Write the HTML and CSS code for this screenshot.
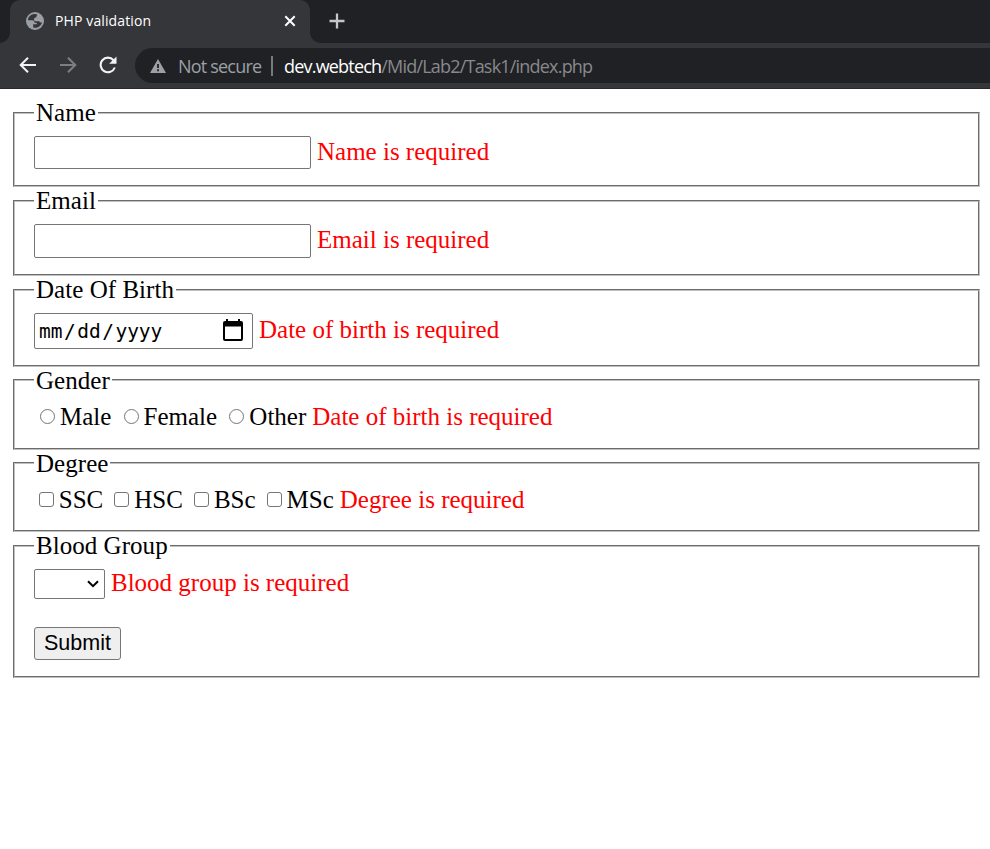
FILE: index.html
```html
<!DOCTYPE html>
<html lang="en">
<head>
<meta charset="utf-8">
<title>PHP validation</title>
<link rel="stylesheet" href="styles.css">
</head>
<body>
<header class="browser">
  <div class="tabstrip">
    <div class="tab">
      <svg class="globe" width="18" height="18" viewBox="0 0 18 18"><circle cx="9" cy="9" r="9" fill="#9aa0a6"/><path d="M7.2 2.2 C4 2.8 2 5.4 2 8.2 L6 8.2 C7.7 8.2 8.6 9 8.6 10.7 L10.8 10.7 L10.8 12.3 L7.2 12.3 L7.2 15.6 C11 16.7 15.2 14.3 16 10.2 C14.8 10.8 13.7 10.5 13.2 9.3 L9.8 9.3 C8.5 9.3 8 8.4 8 7.3 C8 6 8.9 5.4 10.3 5.4 C10.3 4.4 10.7 3.5 11.6 2.8 C10.2 2 8.7 1.9 7.2 2.2Z" fill="#35363a"/></svg>
      <span class="tab-title">PHP validation</span>
      <svg class="close" width="12" height="12" viewBox="0 0 12 12"><path d="M1.3 1.3L10.7 10.7M10.7 1.3L1.3 10.7" stroke="#fff" stroke-width="2"/></svg>
    </div>
    <svg class="plus" width="16" height="16" viewBox="0 0 16 16"><path d="M8 .5V15.500M.5 8H15.500" stroke="#c4c6ca" stroke-width="2.300"/></svg>
  </div>
  <div class="toolbar">
    <svg class="nav" width="18" height="18" viewBox="0 0 18 18"><path d="M17 9H2M9 1.700L1.700 9L9 16.300" fill="none" stroke="#f1f3f4" stroke-width="2"/></svg>
    <svg class="nav" width="18" height="18" viewBox="0 0 18 18"><path d="M1 9H16M9 1.700L16.300 9L9 16.300" fill="none" stroke="#7d7e82" stroke-width="2"/></svg>
    <svg class="nav" width="18" height="18" viewBox="0 0 18 18"><path d="M15.800 11.500A7.300 7.300 0 1 1 14.500 4.200" fill="none" stroke="#f1f3f4" stroke-width="2.100"/><path d="M17.500 .5V7.800H10.200Z" fill="#f1f3f4"/></svg>
    <div class="address">
      <svg class="warn" width="16" height="14" viewBox="0 0 16 14"><path d="M8 0L16 14H0Z" fill="#9aa0a6"/><path d="M8 5V9M8 10.300V12.200" stroke="#202124" stroke-width="1.800"/></svg>
      <span class="insecure">Not secure</span>
      <span class="divider"></span>
      <span class="host">dev.webtech</span><span class="path">/Mid/Lab2/Task1/index.php</span>
    </div>
  </div>
</header>
<form class="form">
  <fieldset class="name">
    <legend>Name</legend>
    <div class="row"><input class="text" type="text" aria-label="Name"><span class="error">Name is required</span></div>
  </fieldset>
  <fieldset class="email">
    <legend>Email</legend>
    <div class="row"><input class="text" type="text" aria-label="Email"><span class="error">Email is required</span></div>
  </fieldset>
  <fieldset class="birth">
    <legend>Date Of Birth</legend>
    <div class="row">
      <div class="date"><span>mm</span><span class="slash">/</span><span>dd</span><span class="slash">/</span><span>yyyy</span>
        <svg class="calendar" width="20" height="22" viewBox="0 0 20 22"><path d="M2 2H18Q20 2 20 4V20Q20 22 18 22H2Q0 22 0 20V4Q0 2 2 2ZM2 7.500V20H18V7.500Z" fill-rule="evenodd"/><path d="M3 0H5V3H3ZM15 0H17V3H15Z"/></svg>
      </div><span class="error">Date of birth is required</span>
    </div>
  </fieldset>
  <fieldset class="gender">
    <legend>Gender</legend>
    <div class="row">
      <label><input type="radio" name="gender">Male</label>
      <label><input type="radio" name="gender">Female</label>
      <label><input type="radio" name="gender">Other</label>
      <span class="error">Date of birth is required</span>
    </div>
  </fieldset>
  <fieldset class="degree">
    <legend>Degree</legend>
    <div class="row">
      <label><input type="checkbox">SSC</label>
      <label><input type="checkbox">HSC</label>
      <label><input type="checkbox">BSc</label>
      <label><input type="checkbox">MSc</label>
      <span class="error">Degree is required</span>
    </div>
  </fieldset>
  <fieldset class="blood">
    <legend>Blood Group</legend>
    <div class="row">
      <div class="select"><svg width="12" height="8" viewBox="0 0 12 8"><path d="M1 1.300L6 6.200L11 1.300" fill="none" stroke="#000" stroke-width="2"/></svg></div>
      <span class="error">Blood group is required</span>
    </div>
    <button class="submit" type="button">Submit</button>
  </fieldset>
</form>
</body>
</html>
```
FILE: styles.css
```css
* { box-sizing: border-box; }
body { margin: 0; background: #fff; color: #000; font: 25px/26px "Liberation Serif", serif; }
svg { display: block; flex: none; }
.browser { height: 89px; background: #35363a; border-bottom: 1px solid #28292c; font-family: "Open Sans", sans-serif; white-space: nowrap; }
.tabstrip { display: flex; height: 43px; background: #202124; padding-left: 10px; }
.tab { position: relative; display: flex; align-items: center; width: 300px; height: 43px; padding: 0 14px 1px 16px; background: #35363a; border-radius: 10px 10px 0 0; }
.tab::before, .tab::after { content: ""; position: absolute; bottom: 0; width: 10px; height: 10px; }
.tab::before { left: -10px; background: radial-gradient(circle at 0 0, #202124 9.5px, #35363a 10px); }
.tab::after { right: -10px; background: radial-gradient(circle at 100% 0, #202124 9.5px, #35363a 10px); }
.tab-title { margin-left: 11px; color: #fff; font-size: 14px; letter-spacing: .12px; }
.close { margin-left: auto; }
.plus { margin: 13px 0 0 19px; }
.toolbar { display: flex; align-items: center; height: 45px; padding: 0 0 1px 18.500px; }
.nav { margin-right: 22px; }
.address { display: flex; align-items: center; flex: 1; height: 35px; margin: 1px 0 0 -3.500px; padding: 0 0 0 15px; border-radius: 18px 0 0 18px; background: #202124; font-size: 18px; }
.insecure { width: 83px; margin-left: 12px; color: #9aa0a6; letter-spacing: -.8px; }
.divider { width: 2px; height: 20px; margin: 0 11px 0 10px; background: #77797d; }
.host { color: #fff; letter-spacing: -.8px; }
.path { color: #88898c; letter-spacing: -.8px; }
.form { padding: 11px 10px 0 13px; }
fieldset { min-width: 0; margin: 0; padding: 0 19px; border: 2px groove #c0c0c0; }
legend { height: 26px; padding: 0 2px; letter-spacing: .04px; }
.row { display: flex; align-items: center; }
.error { color: #f00; margin-left: 6px; }
.name { height: 87px; }
.email { height: 88px; margin-top: 1px; }
.birth { height: 90px; margin-top: 1px; }
.gender { height: 83px; }
.degree { height: 82px; }
.gender legend, .degree legend { line-height: 28px; }
.blood { height: 145px; margin-top: 1px; }
.name .row { height: 33px; margin-top: 10px; }
.email .row { height: 34px; margin-top: 10px; }
.birth .row { height: 36px; margin-top: 10px; }
.gender .row, .degree .row { height: 26px; margin-top: 11px; }
.blood .row { height: 30px; margin-top: 10px; }
.name .error, .email .error, .birth .error, .blood .error { padding-bottom: 2px; }
.text { width: 277px; height: 100%; margin: 0; border: 1px solid #767676; border-radius: 2px; background: #fff; }
.date { display: flex; align-items: center; width: 219px; height: 36px; padding: 0 9px 0 4px; border: 1px solid #767676; border-radius: 2px; font: 19.500px "DejaVu Sans Mono", monospace; }
.date span { letter-spacing: -.1px; }
.slash { margin: 0 1.700px; }
.calendar { margin: -2px 0 0 auto; }
label { display: flex; align-items: center; }
input[type="radio"] { appearance: none; width: 15px; height: 15px; margin: 0 5px 2px 6px; border: 1px solid #767676; border-radius: 50%; }
input[type="checkbox"] { appearance: none; width: 15px; height: 15px; margin: 0 4.800px 2px 5px; border: 1px solid #767676; border-radius: 3px; }
.gender label + label, .degree label + label { margin-left: 6.200px; }
.select { display: flex; align-items: center; justify-content: flex-end; width: 71px; height: 30px; padding-right: 5px; border: 1px solid #767676; border-radius: 2px; }
.submit { display: block; width: 87px; height: 33px; margin: 28px 0 0; padding: 0 0 1px; border: 1px solid #767676; border-radius: 3px; background: #efefef; color: #000; font: 21.500px/30px "Liberation Sans", sans-serif; }
```
